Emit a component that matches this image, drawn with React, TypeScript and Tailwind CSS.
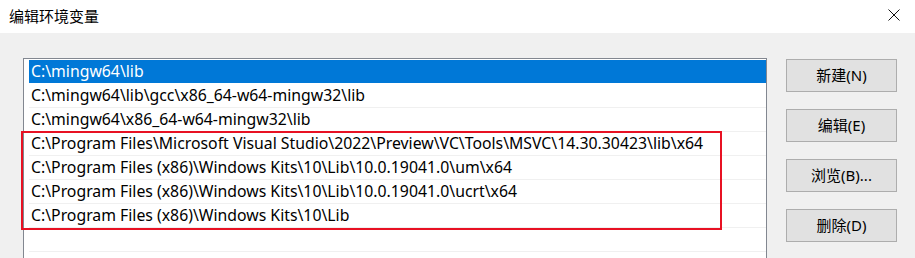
import React from "react";

const rows = [
  "C:\\mingw64\\lib",
  "C:\\mingw64\\lib\\gcc\\x86_64-w64-mingw32\\lib",
  "C:\\mingw64\\x86_64-w64-mingw32\\lib",
  "C:\\Program Files\\Microsoft Visual Studio\\2022\\Preview\\VC\\Tools\\MSVC\\14.30.30423\\lib\\x64",
  "C:\\Program Files (x86)\\Windows Kits\\10\\Lib\\10.0.19041.0\\um\\x64",
  "C:\\Program Files (x86)\\Windows Kits\\10\\Lib\\10.0.19041.0\\ucrt\\x64",
  "C:\\Program Files (x86)\\Windows Kits\\10\\Lib",
  "",
  "",
];

const buttons = ["新建(N)", "编辑(E)", "浏览(B)...", "删除(D)"];

export default function App() {
  return (
    <div
      className="w-[915px] h-[258px] overflow-hidden flex flex-col bg-[#f0f0f0] text-[15px] text-black"
      style={{ fontFamily: '"Noto Sans", "Noto Sans CJK SC", sans-serif' }}
    >
      <div className="h-[33px] shrink-0 bg-white flex items-center justify-between pl-[9px] pr-[15px]">
        <span className="leading-none">编辑环境变量</span>
        <svg width="12" height="12" viewBox="0 0 12 12" className="mb-[4px]">
          <path d="M0.5 0.5 L11.5 11.5 M11.5 0.5 L0.5 11.5" stroke="#111" strokeWidth="1" fill="none" />
        </svg>
      </div>
      <div className="flex flex-row pl-[23px] pt-[25px] gap-[19px]">
        <div className="relative w-[744px] h-[220px] shrink-0 bg-white border border-[#828790] pl-[5px] pt-px text-[15.8px]">
          {rows.map((r, i) => (
            <div
              key={i}
              className={
                "h-[24px] flex items-center pl-[2px] border-b border-[#f0f0f0] whitespace-nowrap " +
                (i === 0 ? "bg-[#0078d7] text-white border-white" : "")
              }
            >
              {r}
            </div>
          ))}
          <div className="absolute left-[-3px] top-[72px] w-[701px] h-[99px] border-2 border-[#e81123]" />
        </div>
        <div className="flex flex-col gap-[17px] pt-px">
          {buttons.map((b) => (
            <div
              key={b}
              className="w-[111px] h-[33px] bg-[#e1e1e1] border border-[#adadad] flex items-center justify-center"
            >
              {b}
            </div>
          ))}
        </div>
      </div>
    </div>
  );
}
